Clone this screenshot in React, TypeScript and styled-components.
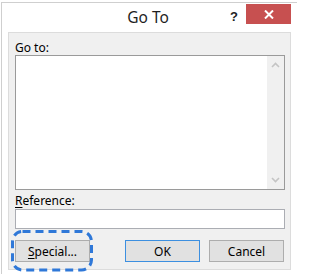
import styled, { createGlobalStyle } from 'styled-components'

const GlobalStyle = createGlobalStyle`
  html, body {
    margin: 0;
    padding: 0;
    background: #ffffff;
  }
  body {
    font-family: "Noto Sans", "Liberation Sans", sans-serif;
    font-size: 12px;
    color: #000;
  }
`

const Page = styled.div`
  width: 297px;
  height: 274px;
  overflow: hidden;
  padding: 2px 0 0 1px;
  box-sizing: border-box;
  background: #ffffff;
`

const Window = styled.div`
  height: 100%;
  border-top: 1px solid #cfcfcf;
  border-left: 1px solid #cfcfcf;
  background: #ffffff;
  display: flex;
  flex-direction: column;
`

const TitleBar = styled.div`
  height: 29px;
  display: grid;
  grid-template-columns: 72px 1fr auto;
  align-items: start;
`

const Title = styled.div`
  grid-column: 2;
  text-align: center;
  font-size: 15.5px;
  line-height: 20px;
  padding-top: 4px;
  color: #1e1e1e;
`

const Controls = styled.div`
  grid-column: 3;
  display: flex;
  align-items: flex-start;
  padding-right: 6px;
`

const Help = styled.div`
  width: 24px;
  text-align: center;
  font-family: "Liberation Sans", sans-serif;
  font-weight: bold;
  font-size: 13px;
  line-height: 14px;
  padding-top: 7px;
  color: #222;
`

const Close = styled.div`
  width: 45px;
  height: 20px;
  margin-top: 1px;
  background: #c75050;
  display: flex;
  align-items: center;
  justify-content: center;
`

const Panel = styled.div`
  margin-left: 6px;
  width: 283px;
  height: 238px;
  box-sizing: border-box;
  border: 1px solid #dcdcdc;
  background: #f0f0f0;
  padding: 7px 0 0 6px;
`

const Label = styled.div<{ $gap?: number }>`
  line-height: 15px;
  margin-top: ${p => p.$gap ?? 0}px;
  color: #000;
  u {
    text-decoration: underline;
    text-underline-offset: 2px;
  }
`

const ListBox = styled.div`
  width: 270px;
  height: 135px;
  box-sizing: border-box;
  border: 1px solid #9a9a9a;
  background: #fff;
  display: flex;
  justify-content: flex-end;
`

const ScrollTrack = styled.div`
  width: 17px;
  background: #f0f0f0;
  display: flex;
  flex-direction: column;
  justify-content: space-between;
  align-items: center;
  padding: 6px 0;
`

const TextBox = styled.div`
  width: 270px;
  height: 20px;
  box-sizing: border-box;
  border: 1px solid #abadb3;
  background: #fff;
  margin-top: 1px;
`

const ButtonRow = styled.div`
  width: 269px;
  margin-top: 11px;
  display: flex;
  align-items: center;
`

const Spacer = styled.div`
  flex: 1;
`

const Button = styled.div<{ $default?: boolean; $gap?: number }>`
  width: 75px;
  height: 22px;
  box-sizing: border-box;
  margin-left: ${p => p.$gap ?? 0}px;
  border: 1px solid ${p => (p.$default ? '#3c8fe0' : '#adadad')};
  background: #e1e1e1;
  display: flex;
  align-items: center;
  justify-content: center;
  line-height: 15px;
  u {
    text-decoration: underline;
    text-underline-offset: 2px;
  }
`

const SpecialWrap = styled.div`
  position: relative;
  width: 75px;
  height: 22px;
`

const Highlight = styled.svg`
  position: absolute;
  left: -4px;
  top: -10px;
  overflow: visible;
  pointer-events: none;
`

const Chevron = ({ up }: { up?: boolean }) => (
  <svg width="9" height="6" viewBox="0 0 9 6">
    <path
      d={up ? 'M1 5 L4.5 1.5 L8 5' : 'M1 1 L4.5 4.5 L8 1'}
      fill="none"
      stroke="#c4c4c4"
      strokeWidth="1.6"
    />
  </svg>
)

export default function App() {
  return (
    <Page>
      <GlobalStyle />
      <Window>
        <TitleBar>
          <Title>Go To</Title>
          <Controls>
            <Help>?</Help>
            <Close>
              <svg width="10" height="9" viewBox="0 0 10 9">
                <path d="M1 0.5 L9 8.5 M9 0.5 L1 8.5" stroke="#fff" strokeWidth="2" />
              </svg>
            </Close>
          </Controls>
        </TitleBar>
        <Panel>
          <Label>Go to:</Label>
          <ListBox>
            <ScrollTrack>
              <Chevron up />
              <Chevron />
            </ScrollTrack>
          </ListBox>
          <Label $gap={3}>
            <u>R</u>eference:
          </Label>
          <TextBox />
          <ButtonRow>
            <SpecialWrap>
              <Button>
                <u>S</u>pecial...
              </Button>
              <Highlight width="80" height="40">
                <rect
                  x="1.5"
                  y="1.5"
                  width="79"
                  height="38.5"
                  rx="10"
                  fill="none"
                  stroke="#2f78d8"
                  strokeWidth="3"
                  strokeDasharray="8 5"
                />
              </Highlight>
            </SpecialWrap>
            <Spacer />
            <Button $default>OK</Button>
            <Button $gap={9}>Cancel</Button>
          </ButtonRow>
        </Panel>
      </Window>
    </Page>
  )
}
